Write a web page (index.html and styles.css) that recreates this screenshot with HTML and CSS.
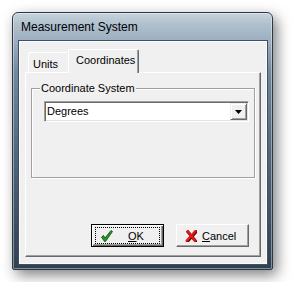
FILE: index.html
```html
<!DOCTYPE html>
<html>
<head>
  <title>Measurement System</title>
  <meta name="viewport" content="width=device-width, initial-scale=1.0">
  <link rel="stylesheet" href="styles.css">
</head>
<body>
  <div class="window">
    <div class="titlebar">Measurement System</div>
    <div class="client">
      <div class="tabs">
        <div class="tab tab-units">Units</div>
        <div class="tab tab-active">Coordinates</div>
      </div>
      <div class="panel">
        <fieldset class="group">
          <legend>Coordinate System</legend>
          <div class="combo">
            <span class="combo-value">Degrees</span>
            <span class="combo-btn">
              <svg width="7" height="4" viewBox="0 0 7 4"><polygon points="0,0 7,0 3.5,4" fill="#000"/></svg>
            </span>
          </div>
        </fieldset>
        <div class="buttons">
          <button class="btn btn-default">
            <span class="focus">
              <svg class="glyph" width="12" height="12" viewBox="0 0 12 12">
                <path d="M0.5 7 L2.5 5.5 L4 8 L10 0.5 L11.5 1.5 L4.5 11.5 L3.5 11.5 Z" fill="#1f9a1f" stroke="#0a4a0a" stroke-width="0.8" stroke-linejoin="round"/>
              </svg>
              <span class="label label-ok"><u>O</u>K</span>
            </span>
          </button>
          <button class="btn">
            <svg class="glyph" width="12" height="12" viewBox="0 0 12 12">
              <path d="M2.5 1.5 L10 10.5 M10.5 1 L2 10.5" stroke="#6a0000" stroke-width="3" stroke-linecap="square" transform="translate(0.7 0.7)"/>
              <path d="M2.5 1.5 L10 10.5 M10.5 1 L2 10.5" stroke="#e01818" stroke-width="2.4" stroke-linecap="square"/>
            </svg>
            <span class="label"><u>C</u>ancel</span>
          </button>
        </div>
      </div>
    </div>
  </div>
</body>
</html>
```

FILE: styles.css
```css
* {
  box-sizing: border-box;
}
body {
  margin: 0;
  padding: 12px;
  background: #fff;
  font-family: "Liberation Sans", Arial, sans-serif;
  font-size: 11px;
  color: #000;
}
.window {
  width: 261px;
  height: 258px;
  display: flex;
  flex-direction: column;
  border: 1px solid #2c3843;
  border-radius: 6px 6px 2px 2px;
  background: linear-gradient(180deg, #c7d3dd 0, #aebfcd 12px, #9caec0 28px, #71879a 60px, #52677a 140px, #2f4151 100%);
  box-shadow: inset 0 0 0 1px rgba(255, 255, 255, 0.4), 4px 5px 14px rgba(0, 0, 0, 0.5);
}
.titlebar {
  height: 28px;
  padding-left: 8px;
  font-size: 12px;
  line-height: 29px;
  color: #000;
}
.client {
  flex: 1;
  display: flex;
  flex-direction: column;
  margin: 0 5px 5px 6px;
  padding: 7px 5px 6px 5px;
  background: #f0f0f0;
  border: 1px solid #fbfcfd;
  box-shadow: 0 0 0 1px #3e5061;
}
.tabs {
  display: flex;
  align-items: flex-end;
  padding-left: 3px;
}
.tab {
  height: 20px;
  padding: 3px 0 0 4px;
  line-height: 16px;
  background: #f0f0f0;
  border: 1px solid;
  border-color: #fff #696969 transparent #fff;
  border-bottom: none;
  border-radius: 2px 2px 0 0;
  box-shadow: inset -1px 0 #a0a0a0;
}
.tab-units {
  width: 42px;
}
.tab-active {
  position: relative;
  z-index: 1;
  width: 71px;
  height: 24px;
  margin: 0 0 -1px -2px;
  padding: 2px 0 0 7px;
}
.panel {
  flex: 1;
  display: flex;
  flex-direction: column;
  border: 1px solid;
  border-color: #fff #696969 #696969 #fff;
  box-shadow: inset -1px -1px #a0a0a0;
}
.group {
  margin: 9px 5px 0 5px;
  padding: 0;
  min-width: 0;
  border: 1px solid #a0a0a0;
  box-shadow: inset 1px 1px #fff, 1px 1px #fff;
}
.group legend {
  margin-left: 8px;
  padding: 0 1px;
  line-height: 13px;
  background: #f0f0f0;
}
.combo {
  display: flex;
  height: 21px;
  margin: 6px 5px 55px 12px;
  padding: 1px;
  background: #fff;
  border: 1px solid;
  border-color: #a0a0a0 #fff #fff #a0a0a0;
  box-shadow: inset 1px 1px #696969, inset -1px -1px #e3e3e3;
}
.combo-value {
  flex: 1;
  padding-left: 1px;
  line-height: 17px;
}
.combo-btn {
  width: 17px;
  height: 17px;
  display: flex;
  align-items: center;
  justify-content: center;
  background: #f0f0f0;
  border: 1px solid;
  border-color: #f0f0f0 #696969 #696969 #f0f0f0;
  box-shadow: inset 1px 1px #fff, inset -1px -1px #a0a0a0;
}
.buttons {
  display: flex;
  justify-content: flex-end;
  gap: 12px;
  margin: auto 11px 9px 0;
}
.btn {
  width: 73px;
  height: 23px;
  display: flex;
  align-items: center;
  padding: 0 0 0 8px;
  font-family: inherit;
  font-size: 11px;
  color: #000;
  background: #f0f0f0;
  border: 1px solid;
  border-color: #fff #696969 #696969 #fff;
  box-shadow: inset -1px -1px #a0a0a0;
}
.btn-default {
  padding: 2px 3px 2px 3px;
  border: 1px solid #000;
  box-shadow: inset 1px 1px #fff, inset -1px -1px #696969, inset -2px -2px #a0a0a0;
}
.focus {
  flex: 1;
  height: 100%;
  display: flex;
  align-items: center;
  padding-left: 5px;
  border: 1px dotted #000;
}
.glyph {
  flex: none;
}
.label {
  margin-left: 5px;
}
.label-ok {
  margin-left: 15px;
}
```
